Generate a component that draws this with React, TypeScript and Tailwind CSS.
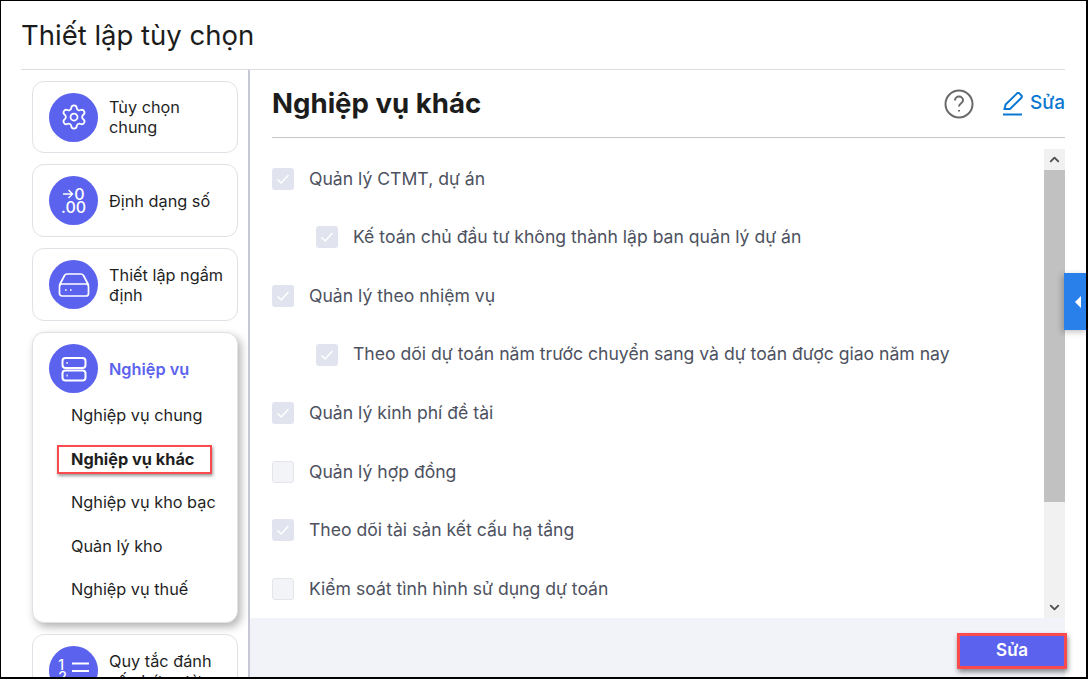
import { Settings, ChevronUp, ChevronDown } from 'lucide-react'
import type { ReactNode } from 'react'

const rows = [
  { label: 'Quản lý CTMT, dự án', checked: true, nested: false },
  { label: 'Kế toán chủ đầu tư không thành lập ban quản lý dự án', checked: true, nested: true },
  { label: 'Quản lý theo nhiệm vụ', checked: true, nested: false },
  { label: 'Theo dõi dự toán năm trước chuyển sang và dự toán được giao năm nay', checked: true, nested: true },
  { label: 'Quản lý kinh phí đề tài', checked: true, nested: false },
  { label: 'Quản lý hợp đồng', checked: false, nested: false },
  { label: 'Theo dõi tài sản kết cấu hạ tầng', checked: true, nested: false },
  { label: 'Kiểm soát tình hình sử dụng dự toán', checked: false, nested: false },
]

function IconCircle({ children }: { children: ReactNode }) {
  return (
    <div className="w-[49px] h-[49px] rounded-full bg-[#5b63ee] flex items-center justify-center shrink-0 text-white">
      {children}
    </div>
  )
}

function NavCard({ icon, label, first }: { icon: ReactNode; label: ReactNode; first?: boolean }) {
  return (
    <div
      className={`rounded-[12px] border border-[#e0e1e6] bg-white pl-4 pr-2 flex items-center gap-[11px] shrink-0 ${
        first ? 'h-[72px]' : 'h-[73px]'
      }`}
    >
      <IconCircle>{icon}</IconCircle>
      <div className="text-[16.3px] leading-[20px] text-[#1f1f1f]">{label}</div>
    </div>
  )
}

function NumberFormatIcon() {
  return (
    <div className="flex flex-col items-center text-[16px] leading-[13px] font-medium">
      <div className="flex items-center">
        <svg width="12" height="12" viewBox="0 0 12 12" fill="none" stroke="currentColor" strokeWidth="1.4">
          <path d="M1 6h9.5M6.5 2l4 4-4 4" />
        </svg>
        <span>0</span>
      </div>
      <span>.00</span>
    </div>
  )
}

function DriveIcon() {
  return (
    <svg width="32" height="26" viewBox="0 0 32 26" fill="none" stroke="currentColor" strokeWidth="1.7">
      <path d="M1.5 13 6.5 3.5a3 3 0 0 1 2.6-1.5h13.8a3 3 0 0 1 2.6 1.5L30.5 13" />
      <rect x="1.5" y="12" width="29" height="12" rx="2.5" />
      <path d="M7 18h1.6M12 18h1.6" />
    </svg>
  )
}

function ServerIcon() {
  return (
    <svg width="26" height="26" viewBox="0 0 26 26" fill="none" stroke="currentColor" strokeWidth="2">
      <rect x="1.5" y="2" width="23" height="10" rx="3" />
      <rect x="1.5" y="14.5" width="23" height="10" rx="3" />
      <path d="M5.5 7h1.2M5.5 19.5h1.2" />
    </svg>
  )
}

function OrderedIcon() {
  return (
    <div className="flex items-center gap-[5px] text-[14px] leading-[12px] font-medium">
      <div className="flex flex-col">
        <span>1</span>
        <span>2</span>
      </div>
      <svg width="17" height="20" viewBox="0 0 17 20" fill="none" stroke="currentColor" strokeWidth="2">
        <path d="M0 2.5h17M0 10h17M0 17.5h17" />
      </svg>
    </div>
  )
}

function Checkbox({ checked }: { checked: boolean }) {
  return (
    <div
      className={`w-[22px] h-[22px] rounded-[3px] flex items-center justify-center shrink-0 ${
        checked ? 'bg-[#e1e3ee]' : 'bg-[#f3f4f7] border border-[#e4e5ea]'
      }`}
    >
      {checked && (
        <svg width="16" height="16" viewBox="0 0 16 16" fill="none" stroke="white" strokeWidth="1.5">
          <path d="M2.5 8.5 6.2 12 13.5 4" />
        </svg>
      )}
    </div>
  )
}

export default function App() {
  return (
    <div
      className="relative w-[1088px] h-[679px] bg-white border-l border-t border-r-2 border-b-2 border-black overflow-hidden flex flex-col pl-5 pr-[21px]"
      style={{ fontFamily: 'Inter, sans-serif' }}
    >
      <h1 className="h-[69px] shrink-0 border-b border-[#dcdde1] pt-[15px] text-[27.5px] leading-[38px] text-[#1c1c1c]">
        Thiết lập tùy chọn
      </h1>

      <div className="flex flex-1 min-h-0">
        <aside className="w-[229px] shrink-0 border-r-2 border-[#c6c8d6] pl-[11px] pr-[10px] pt-[11px] flex flex-col gap-[11px] overflow-hidden">
          <NavCard first icon={<Settings size={28} strokeWidth={1.5} />} label={<>Tùy chọn<br />chung</>} />
          <NavCard icon={<NumberFormatIcon />} label="Định dạng số" />
          <NavCard icon={<DriveIcon />} label={<>Thiết lập ngầm<br />định</>} />

          <div className="h-[291px] shrink-0 rounded-[12px] border border-[#e0e1e6] bg-white shadow-[3px_4px_8px_rgba(0,0,0,0.3)] pl-4 pr-2 pt-[11px]">
            <div className="flex items-center gap-[11px]">
              <IconCircle><ServerIcon /></IconCircle>
              <span className="pt-[2px] text-[16.3px] font-semibold text-[#5b63ee]">Nghiệp vụ</span>
            </div>
            <ul className="pt-[0.5px] text-[16.3px] leading-[28px] text-[#1f1f1f]">
              <li className="h-[43.5px] flex items-center pl-[22px]">Nghiệp vụ chung</li>
              <li className="h-[43.5px] flex items-center">
                <span className="ml-[8px] mt-[1px] w-[155px] h-[29px] pl-[12px] flex items-center border-[2px] border-[#f84a4f] font-bold shadow-[1px_2px_3px_rgba(0,0,0,0.4)]">
                  Nghiệp vụ khác
                </span>
              </li>
              <li className="h-[43.5px] flex items-center pl-[22px]">Nghiệp vụ kho bạc</li>
              <li className="h-[43.5px] flex items-center pl-[22px]">Quản lý kho</li>
              <li className="h-[43.5px] flex items-center pl-[22px]">Nghiệp vụ thuế</li>
            </ul>
          </div>

          <NavCard icon={<OrderedIcon />} label={<>Quy tắc đánh<br />số chứng từ</>} />
        </aside>

        <main className="flex-1 min-w-0 flex flex-col">
          <header className="h-[68px] shrink-0 ml-[22px] border-b border-[#c4c5c9] flex items-center justify-between">
            <h2 className="text-[27.6px] font-bold text-[#1c1c1c]">Nghiệp vụ khác</h2>
            <div className="flex items-center gap-[28px]">
              <svg width="30" height="30" viewBox="0 0 30 30" fill="none" stroke="#6a6a6a" strokeWidth="2">
                <circle cx="15" cy="15" r="13.5" />
                <path d="M11 11.5a4 4 0 0 1 8 0c0 2.6-4 3-4 6" />
                <path d="M15 21v1.6" />
              </svg>
              <div className="flex items-center gap-[6px] text-[#0a78d2]">
                <svg width="22" height="24" viewBox="0 0 22 24" fill="none" stroke="currentColor" strokeWidth="2">
                  <path d="M2.5 17 3.6 12.6 14.8 1.6a2 2 0 0 1 2.8 0l1.6 1.6a2 2 0 0 1 0 2.8L8 17l-5.5 0Z" />
                  <path d="M1 22.5h19" />
                </svg>
                <span className="text-[19px] font-medium">Sửa</span>
              </div>
            </div>
          </header>

          <div className="flex-1 min-h-0 flex mt-[11px] pl-[22px]">
            <div className="flex-1 min-w-0 flex flex-col pt-[0.5px] overflow-hidden">
              {rows.map((row) => (
                <div
                  key={row.label}
                  className={`h-[58.6px] shrink-0 flex items-center gap-[15px] text-[17.6px] text-[#4d5160] ${
                    row.nested ? 'pl-[44px]' : ''
                  }`}
                >
                  <Checkbox checked={row.checked} />
                  <span>{row.label}</span>
                </div>
              ))}
            </div>
            <div className="w-[21px] shrink-0 bg-[#f1f1f1] flex flex-col">
              <div className="h-[21px] flex items-center justify-center text-[#505050]">
                <ChevronUp size={15} strokeWidth={3} />
              </div>
              <div className="h-[332px] bg-[#c1c1c1]" />
              <div className="flex-1" />
              <div className="h-[21px] flex items-center justify-center text-[#505050]">
                <ChevronDown size={15} strokeWidth={3} />
              </div>
            </div>
          </div>

          <footer className="h-[59px] shrink-0 bg-[#f2f3f8] flex items-center justify-end">
            <button className="w-[110px] h-[36px] mt-[7px] mr-[-2px] bg-[#5b63ee] border-[3px] border-[#f84a4f] text-white text-[17px] font-semibold shadow-[1px_3px_5px_rgba(0,0,0,0.45)]">
              Sửa
            </button>
          </footer>
        </main>
      </div>

      <div className="absolute right-[-2px] top-[272px] w-[24px] h-[57px] pl-[3px] bg-[#2a80ea] shadow-[-2px_2px_6px_rgba(0,0,0,0.25)] flex items-center justify-center">
        <div className="w-0 h-0 border-y-[6px] border-y-transparent border-r-[6px] border-r-white" />
      </div>
    </div>
  )
}
